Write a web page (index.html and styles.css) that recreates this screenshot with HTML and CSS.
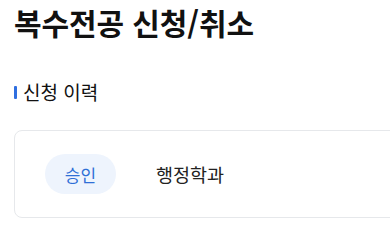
FILE: index.html
```html
<!DOCTYPE html>
<html lang="ko">
<head>
<meta charset="utf-8">
<link rel="stylesheet" href="styles.css">
</head>
<body>
<div class="page">
  <h1 class="title">복수전공 신청/취소</h1>
  <h2 class="section-title">신청 이력</h2>
  <div class="card">
    <span class="badge">승인</span>
    <span class="dept">행정학과</span>
  </div>
</div>
</body>
</html>
```
FILE: styles.css
```css
html, body {
  margin: 0;
  padding: 0;
  background: #ffffff;
  overflow: hidden;
}
body {
  font-family: "Noto Sans CJK KR", "Noto Sans", sans-serif;
  color: #111111;
}
.page {
  width: 440px;
  padding: 0 0 0 14px;
  box-sizing: border-box;
}
.title {
  margin: 0;
  padding-top: 1px;
  font-size: 30px;
  font-weight: 700;
  line-height: 42px;
  letter-spacing: -0.1px;
}
.section-title {
  margin: 36px 0 0 0;
  display: flex;
  align-items: center;
  gap: 6px;
  font-size: 19px;
  font-weight: 400;
  line-height: 26px;
  color: #111111;
}
.section-title::before {
  content: "";
  width: 3px;
  height: 13px;
  background: #2f6fe0;
  border-radius: 1px;
}
.card {
  margin-top: 25px;
  border: 1px solid #e6e8eb;
  border-radius: 8px;
  padding: 23px 30px;
  display: flex;
  align-items: center;
  gap: 40px;
}
.badge {
  display: inline-flex;
  align-items: center;
  justify-content: center;
  width: 71px;
  height: 40px;
  border-radius: 20px;
  background: #eef4fd;
  color: #2f6fd6;
  font-size: 17px;
  font-weight: 400;
}
.dept {
  font-size: 18.5px;
  font-weight: 400;
  color: #222222;
}
```
